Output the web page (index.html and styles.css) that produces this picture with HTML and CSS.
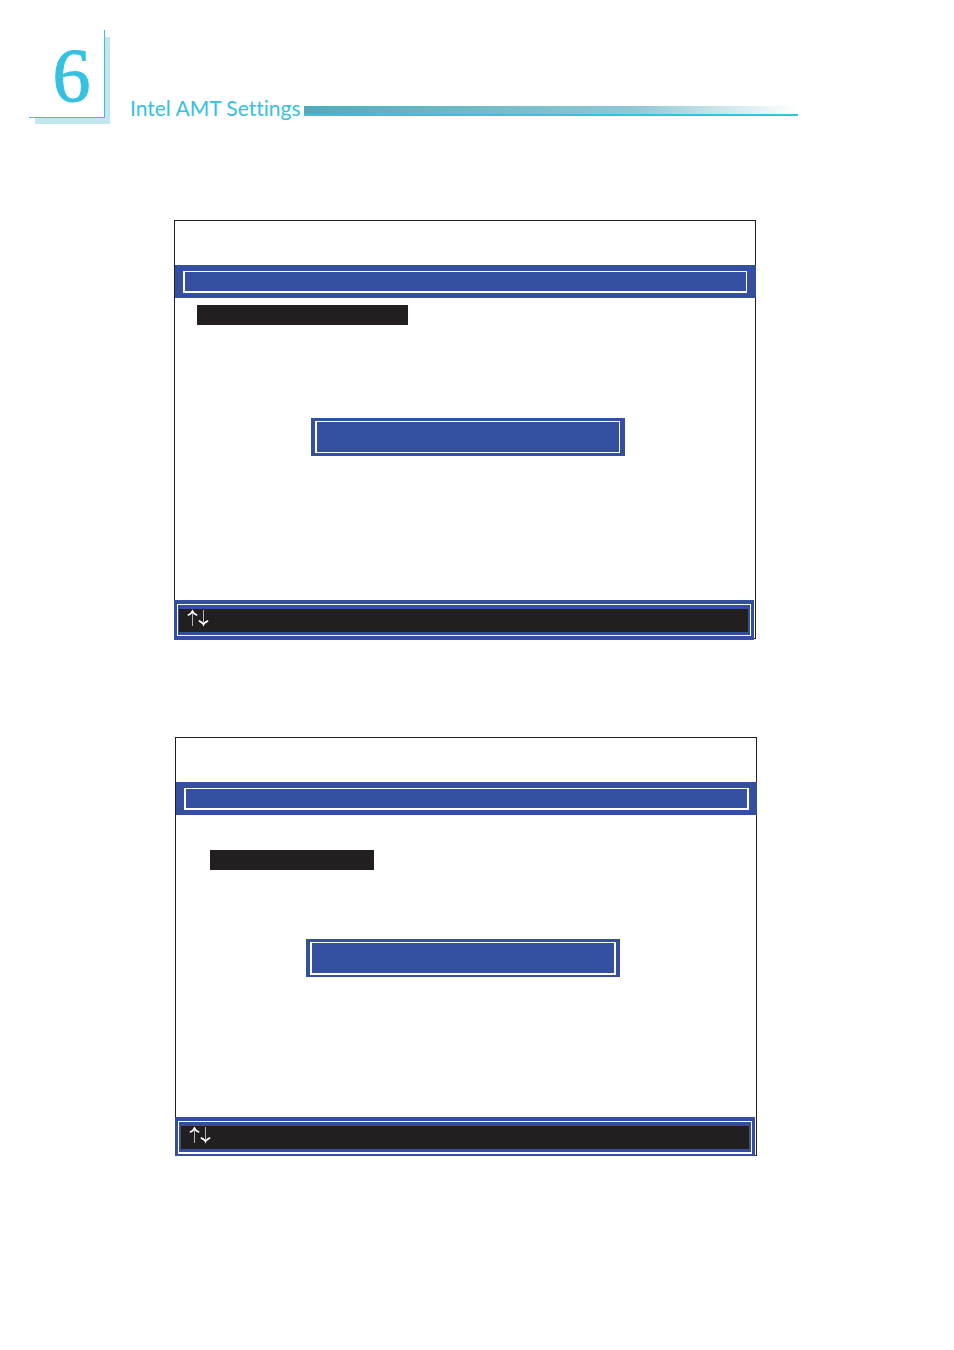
FILE: index.html
```html
<!DOCTYPE html>
<html lang="en">
<head>
<meta charset="utf-8">
<title>Intel AMT Settings</title>
<link rel="stylesheet" href="styles.css">
</head>
<body>
<header class="page-header">
  <div class="chapter">6</div>
  <h1 class="title">Intel AMT Settings</h1>
  <div class="rule"></div>
</header>
<main class="screens">
  <section class="screen">
    <div class="screen-title"><div class="frame frame-left-heavy"></div></div>
    <div class="selection"></div>
    <div class="message"><div class="frame frame-message"></div></div>
    <footer class="keys"><div class="keys-frame"><div class="keys-bar">
      <svg class="arrows" viewBox="0 0 22 18" role="img" aria-label="Up and down arrow keys">
        <path class="shaft" d="M5.5 2V17M16.5 1V16"/>
        <path class="head" d="M5.5 .5Q7 4 10.5 5.5L10 7Q7 6 5.500 4Q4 6 1 7L.5 5.500Q4 4 5.500 .5ZM16.500 17.500Q15 14 11.500 12.500L12 11Q15 12 16.500 14Q18 12 21 11L21.500 12.500Q18 14 16.500 17.500Z"/>
      </svg>
    </div></div></footer>
  </section>
  <section class="screen screen-second">
    <div class="screen-title"><div class="frame"></div></div>
    <div class="selection"></div>
    <div class="message"><div class="frame"></div></div>
    <footer class="keys"><div class="keys-frame"><div class="keys-bar">
      <svg class="arrows" viewBox="0 0 22 18" role="img" aria-label="Up and down arrow keys">
        <path class="shaft" d="M5.5 2V17M16.5 1V16"/>
        <path class="head" d="M5.5 .5Q7 4 10.5 5.5L10 7Q7 6 5.500 4Q4 6 1 7L.5 5.500Q4 4 5.500 .5ZM16.500 17.500Q15 14 11.500 12.500L12 11Q15 12 16.500 14Q18 12 21 11L21.500 12.500Q18 14 16.500 17.500Z"/>
      </svg>
    </div></div></footer>
  </section>
</main>
</body>
</html>
```
FILE: styles.css
```css
* {
  box-sizing: border-box;
}

body {
  margin: 0;
  background: #fff;
  color: #231f20;
  font-family: "Liberation Serif", serif;
}

.page-header {
  display: flex;
  align-items: flex-end;
  padding: 30px 156px 0 29px;
  color: #35c1df;
}

.chapter {
  width: 76px;
  height: 88px;
  padding-left: 10px;
  border-right: 1px solid #35c1df;
  border-bottom: 1px solid #35c1df;
  background: #fff;
  box-shadow: 6px 7px 0 -1px #c0e6f0, 5px 6px 0 #c0e6f0;
  clip-path: polygon(0 0, 76px 0, 76px 7px, 81px 7px, 81px 94px, 6px 94px, 6px 88px, 0 88px);
  font-size: 76px;
  line-height: 90px;
  text-align: center;
  -webkit-text-stroke: 1px #35c1df;
}

.title {
  margin: 0 3px 0 25px;
  font: 400 21px/20px Lato, sans-serif;
  font-variant-ligatures: none;
  white-space: nowrap;
}

.rule {
  flex: 1;
  height: 10px;
  margin-bottom: 2px;
  border-bottom: 2px solid #35c1df;
  background: linear-gradient(to right, #4eacbb, #91c8d4 67%, #fff);
}

.screens {
  padding: 102px 197px 0 174px;
}

.screen {
  display: flex;
  flex-direction: column;
  margin-right: 1px;
  padding-top: 44px;
  border: 1px solid #231f20;
}

.screen-second {
  margin: 98px 0 0 1px;
}

.screen-title {
  height: 33px;
  margin-right: -1px;
  padding: 6px 9px 5px 8px;
  background: #344fa1;
}

.screen-second .screen-title {
  padding-right: 8px;
}

.frame {
  height: 100%;
  border: 2px solid #fff;
  border-top-width: 1px;
}

.frame-left-heavy {
  border-right-width: 1px;
}

.frame-message {
  border-width: 1px 1px 1px 2px;
}

.selection {
  width: 211px;
  height: 20px;
  margin: 7px 0 0 22px;
  background: #231f20;
}

.screen-second .selection {
  width: 164px;
  margin: 35px 0 0 34px;
}

.message {
  align-self: center;
  width: 314px;
  height: 38px;
  margin: 93px 0 144px 5px;
  padding: 3px 5px 3px 4px;
  background: #344fa1;
}

.screen-second .message {
  margin: 69px 6px 140px 0;
  padding: 3px 4px 2px;
}

.keys {
  margin: 0 1px -2px -1px;
  padding: 4px 3px;
  background: #344fa1;
}

.keys-frame {
  padding: 4px 2px 3px 1px;
  border: 1px solid #fff;
}

.keys-bar {
  height: 23px;
  padding-left: 8px;
  background: #231f20;
}

.arrows {
  display: block;
  width: 22px;
  height: 18px;
}

.shaft {
  fill: none;
  stroke: #b5b3b4;
  stroke-width: 1;
}

.head {
  fill: #fff;
}

.screen-second .keys {
  padding-bottom: 3px;
}

.screen-second .keys-frame {
  padding-left: 2px;
  border-bottom-width: 2px;
}
```
